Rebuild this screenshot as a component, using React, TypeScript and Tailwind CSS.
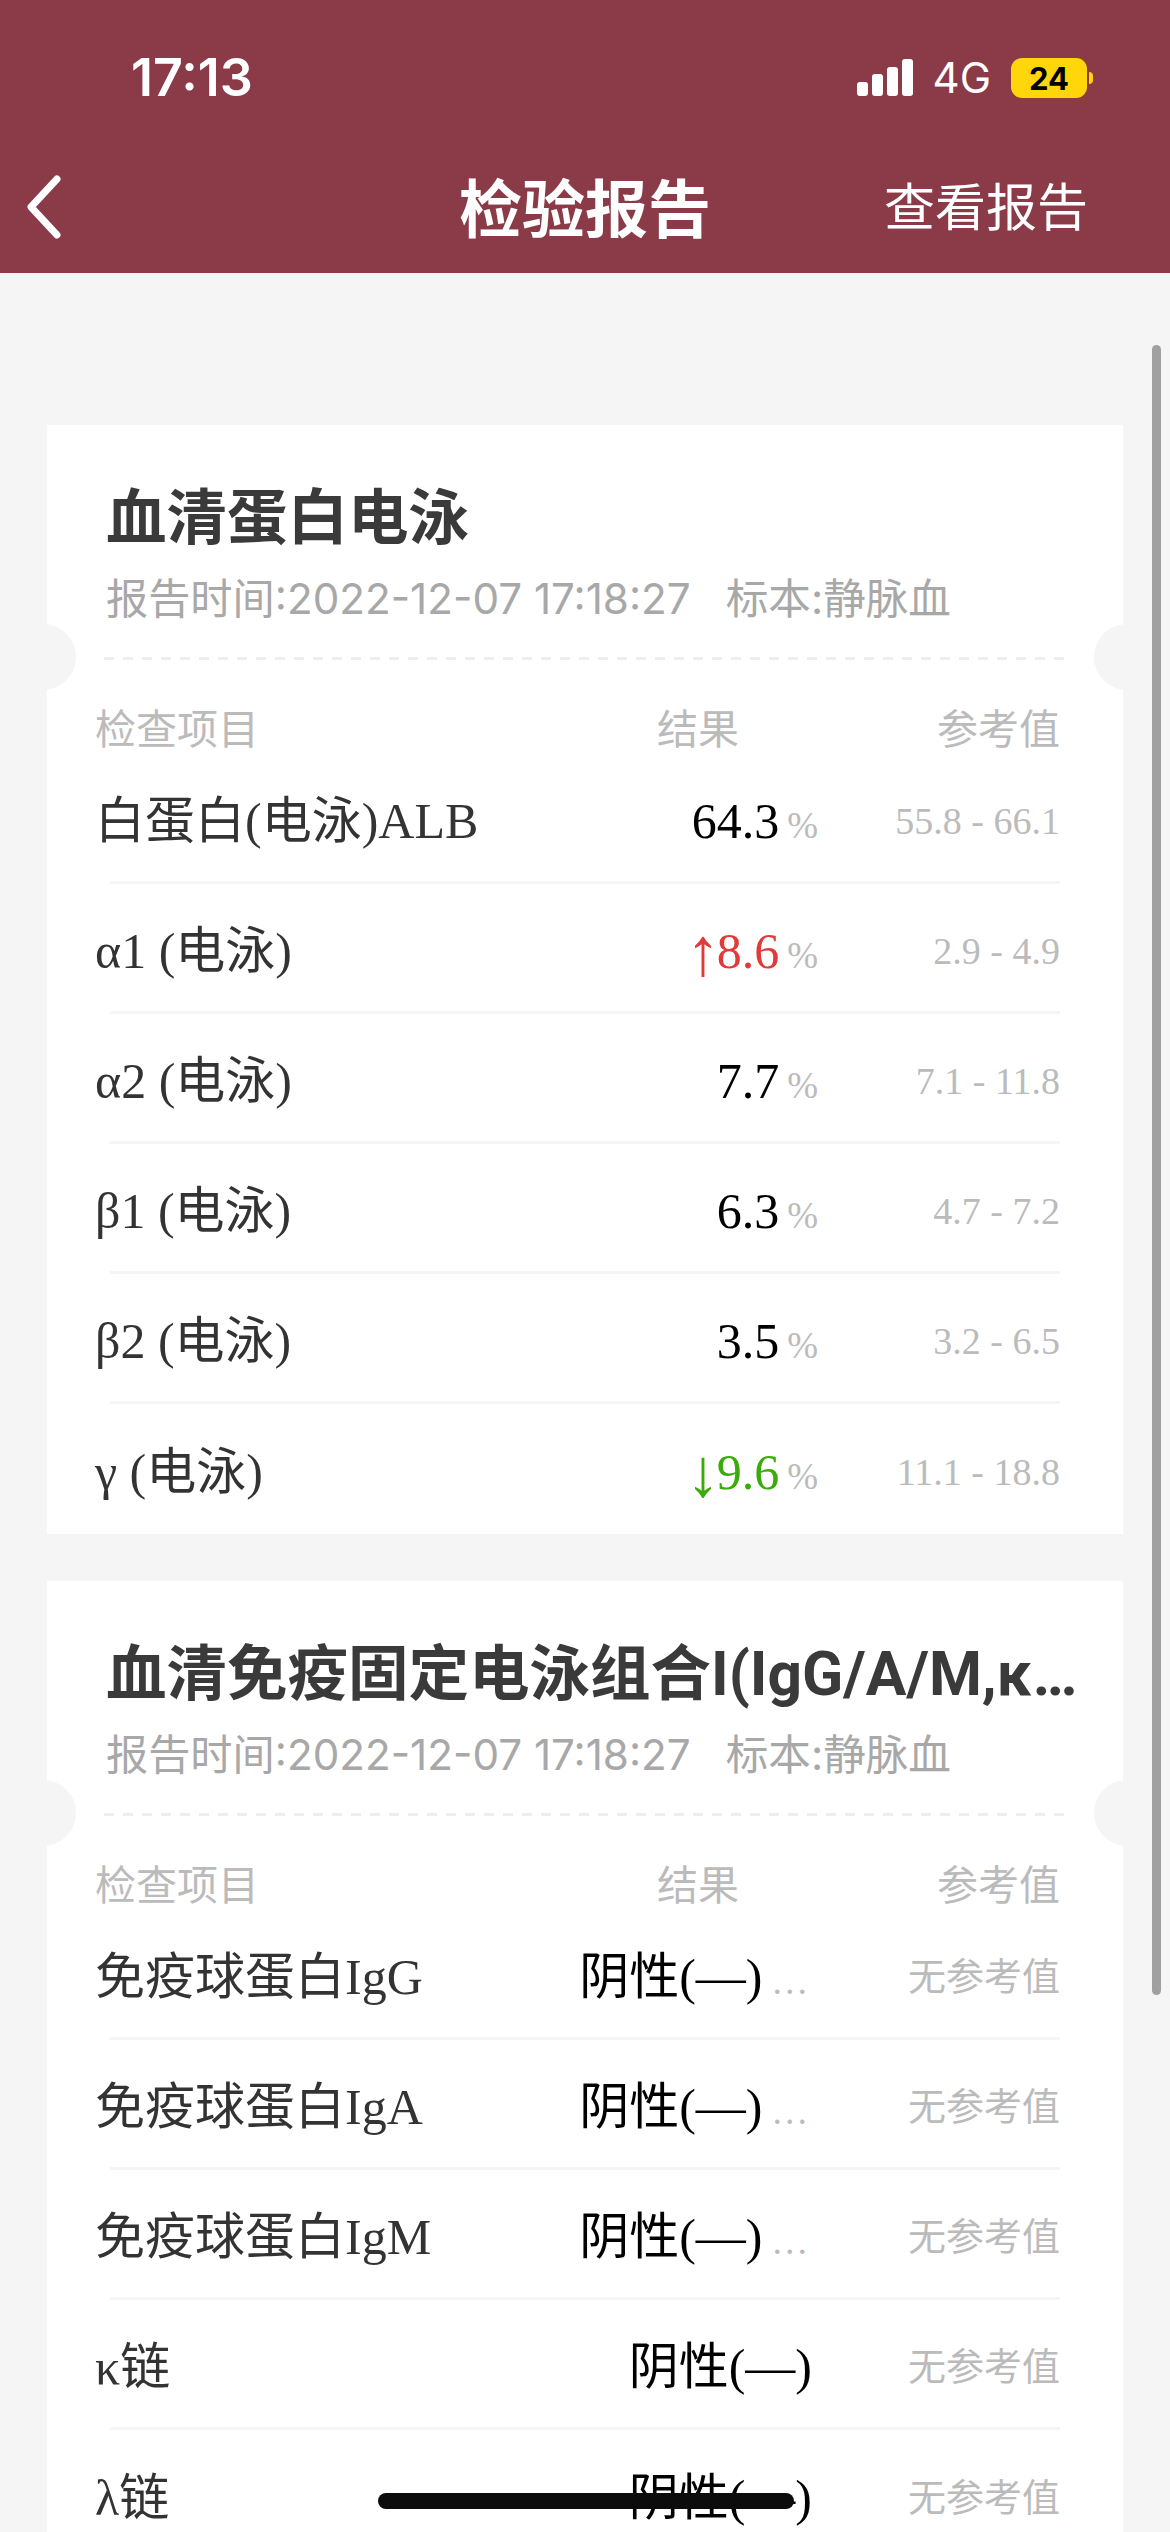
import React from 'react';

const SANS = "font-['Inter','Noto_Sans_CJK_SC',sans-serif]";
const SERIF = "font-['Liberation_Serif','Noto_Sans_CJK_SC',serif]";

type Row = { name: string; value: string; unit?: string; flag?: 'up' | 'down'; ref: string };

const ELECTRO: Row[] = [
  { name: '白蛋白(电泳)ALB', value: '64.3', unit: '%', ref: '55.8 - 66.1' },
  { name: 'α1 (电泳)', value: '8.6', unit: '%', flag: 'up', ref: '2.9 - 4.9' },
  { name: 'α2 (电泳)', value: '7.7', unit: '%', ref: '7.1 - 11.8' },
  { name: 'β1 (电泳)', value: '6.3', unit: '%', ref: '4.7 - 7.2' },
  { name: 'β2 (电泳)', value: '3.5', unit: '%', ref: '3.2 - 6.5' },
  { name: 'γ (电泳)', value: '9.6', unit: '%', flag: 'down', ref: '11.1 - 18.8' },
];

const IMMUNO: Row[] = [
  { name: '免疫球蛋白IgG', value: '阴性(—)', unit: '...', ref: '无参考值' },
  { name: '免疫球蛋白IgA', value: '阴性(—)', unit: '...', ref: '无参考值' },
  { name: '免疫球蛋白IgM', value: '阴性(—)', unit: '...', ref: '无参考值' },
  { name: 'κ链', value: '阴性(—)', ref: '无参考值' },
  { name: 'λ链', value: '阴性(—)', ref: '无参考值' },
];

const ResultRow: React.FC<{ row: Row }> = ({ row }) => {
  const color = row.flag === 'up' ? 'text-[#e23a3a]' : row.flag === 'down' ? 'text-[#3aab0a]' : 'text-black';
  return (
    <div className={`mx-[63px] h-[130px] pt-[6px] flex items-center border-b-[3px] border-[#f5f5f5] last:border-b-0 ${SERIF}`}>
      <div className="flex-1 -ml-[15px] text-[50px] text-[#333333] whitespace-nowrap leading-[60px]">{row.name}</div>
      <div className={`flex justify-end items-baseline whitespace-nowrap ${row.value.length > 4 && !row.unit ? 'pr-[6px]' : ''}`}>
        <span className={`text-[50px] leading-[60px] ${color}`}>
          {row.flag && (
            <span className="relative top-[7px] -mr-[3px] text-[68px] leading-[0]">{row.flag === 'up' ? '↑' : '↓'}</span>
          )}
          {row.value}
        </span>
        {row.unit && (
          <span
            className={`leading-none text-[#bbbbbb] ${
              row.unit === '%' ? 'text-[37px] ml-[8px]' : 'text-[38px] tracking-[3px] ml-[10px] mr-[8px]'
            }`}
          >
            {row.unit}
          </span>
        )}
      </div>
      <div className="w-[242px] text-right text-[38px] leading-[60px] text-[#bbbbbb] whitespace-nowrap">{row.ref}</div>
    </div>
  );
};

const ReportCard: React.FC<{ title: string; rows: Row[] }> = ({ title, rows }) => (
  <section className={`relative bg-white ${SANS}`}>
    <div className="absolute left-[-37px] top-[199px] w-[66px] h-[66px] rounded-full bg-[#f5f5f5]" />
    <div className="absolute right-[-37px] top-[199px] w-[66px] h-[66px] rounded-full bg-[#f5f5f5]" />

    <div className="pt-[58px] pl-[59px] pr-[38px]">
      <h2 className="font-['Roboto','Noto_Sans_CJK_SC',sans-serif] text-[60.5px] leading-[72px] font-bold text-[#3a3a3a] truncate">
        {title}
      </h2>
      <div className="mt-[14px] flex leading-[60px] text-[#a8a8a8] whitespace-nowrap">
        <span className="text-[42.2px]">报告时间:2022-12-07 17:18:27</span>
        <span className="ml-[35px] text-[42.6px]">标本:静脉血</span>
      </div>
    </div>

    <div className="mt-[28px] mx-[57px] h-[3px] bg-[repeating-linear-gradient(90deg,#eeeeee_0,#eeeeee_10px,transparent_10px,transparent_19px)]" />

    <div className="mt-[45px] mx-[48px] pr-[15px] flex text-[41px] leading-[49px] text-[#bbbbbb]">
      <div className="flex-1">检查项目</div>
      <div className="mr-[79px]">结果</div>
      <div className="w-[242px] text-right">参考值</div>
    </div>

    <div>
      {rows.map((row) => (
        <ResultRow key={row.name} row={row} />
      ))}
    </div>
  </section>
);

const App: React.FC = () => {
  return (
    <div className={`relative w-[1170px] h-[2532px] overflow-hidden bg-[#f5f5f5] ${SANS}`}>
      <header className="h-[273px] bg-[#8b3a48] text-white flex flex-col">
        <div className="h-[156px] pl-[131px] pr-[77px] flex items-center justify-between">
          <span className="text-[52px] font-semibold leading-none">17:13</span>
          <div className="flex items-center">
            <svg width="56" height="38" viewBox="0 0 56 38" fill="white">
              <rect x="0" y="23" width="11" height="14" rx="3" />
              <rect x="15" y="15" width="11" height="22" rx="3" />
              <rect x="30" y="8" width="11" height="29" rx="3" />
              <rect x="45" y="0" width="11" height="37" rx="3" />
            </svg>
            <span className="ml-[20px] text-[42px] leading-none">4G</span>
            <div className="ml-[20px] flex items-center">
              <div className="w-[76px] h-[40px] rounded-[11px] bg-[#ffd60a] flex items-center justify-center text-black text-[31px] font-bold leading-none">
                24
              </div>
              <div className="ml-[2px] w-[4px] h-[12px] rounded-r-full bg-[#ffd60a]" />
            </div>
          </div>
        </div>
        <div className="relative flex-1 flex items-center justify-center pb-[10px]">
          <svg className="absolute left-[24px] top-[18px]" width="40" height="66" viewBox="0 0 40 66" fill="none">
            <path d="M33 5 L7 33 L33 61" stroke="white" strokeWidth="7" strokeLinecap="round" strokeLinejoin="round" />
          </svg>
          <h1 className="text-[63px] font-semibold leading-none">检验报告</h1>
          <span className="absolute right-[82px] top-[26px] text-[51px] leading-none">查看报告</span>
        </div>
      </header>

      <main className="pt-[152px] px-[47px] flex flex-col gap-[47px]">
        <ReportCard title="血清蛋白电泳" rows={ELECTRO} />
        <ReportCard title="血清免疫固定电泳组合I(IgG/A/M,κ,λ)" rows={IMMUNO} />
      </main>

      <div className="absolute left-[1152px] top-[345px] w-[9px] h-[1650px] rounded-full bg-[#a0a0a0]" />
      <div className="absolute left-[378px] top-[2493px] w-[416px] h-[16px] rounded-full bg-[#0c0c0c]" />
    </div>
  );
};

export default App;
